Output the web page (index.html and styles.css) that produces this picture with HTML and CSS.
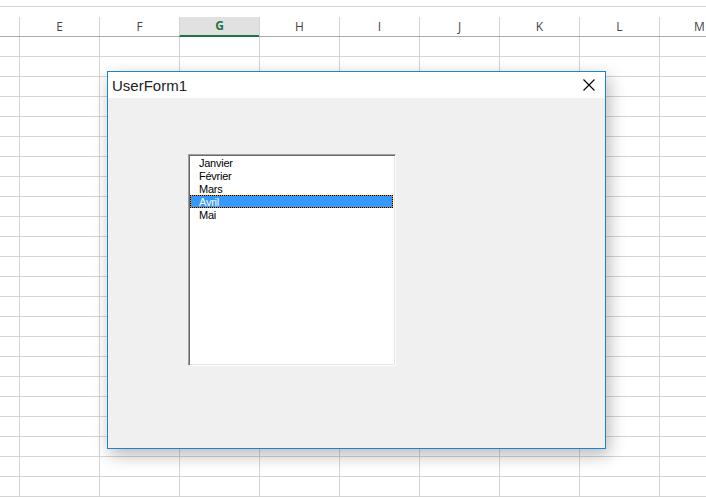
FILE: index.html
```html
<!DOCTYPE html>
<html lang="fr">
<head>
<meta charset="utf-8">
<title>UserForm1</title>
<link rel="stylesheet" href="styles.css">
</head>
<body>
<div class="sheet">
  <div class="topbar"></div>
  <div class="colheads">
    <div class="corner"></div>
    <div class="colhead">E</div>
    <div class="colhead">F</div>
    <div class="colhead active">G</div>
    <div class="colhead">H</div>
    <div class="colhead">I</div>
    <div class="colhead">J</div>
    <div class="colhead">K</div>
    <div class="colhead">L</div>
    <div class="colhead">M</div>
  </div>
  <div class="cells"></div>
</div>

<div class="dialog">
  <div class="titlebar">
    <span class="title">UserForm1</span>
    <svg class="close" width="12" height="12" viewBox="0 0 12 12">
      <path d="M0.5 0.5 L11.5 11.5 M11.5 0.5 L0.5 11.5" stroke="#000" stroke-width="1.1" fill="none"/>
    </svg>
  </div>
  <div class="formbody">
    <div class="listbox">
      <div class="item">Janvier</div>
      <div class="item">Février</div>
      <div class="item">Mars</div>
      <div class="item selected">Avril</div>
      <div class="item">Mai</div>
    </div>
  </div>
</div>
</body>
</html>
```

FILE: styles.css
```css
html, body {
  margin: 0;
  padding: 0;
  background: #fff;
}
body {
  width: 706px;
  height: 497px;
  overflow: hidden;
  position: relative;
  font-family: "Liberation Sans", Arial, sans-serif;
}
.sheet {
  width: 706px;
  height: 497px;
  overflow: hidden;
}
.topbar {
  height: 6px;
  border-bottom: 1px solid #d4d4d4;
}
.colheads {
  display: flex;
  height: 29px;
  border-bottom: 1px solid #ababab;
  width: 760px;
}
.corner {
  flex: 0 0 19px;
}
.colhead {
  flex: 0 0 80px;
  box-sizing: border-box;
  align-self: flex-end;
  height: 19px;
  border-left: 1px solid #d4d4d4;
  text-align: center;
  line-height: 19px;
  font-family: "Open Sans", "Liberation Sans", sans-serif;
  font-size: 12px;
  color: #444;
}
.colhead.active {
  height: 20px;
  margin-bottom: -1px;
  background: #e1e1e1;
  border-bottom: 2px solid #217346;
  line-height: 18px;
  color: #217346;
  font-weight: bold;
  position: relative;
}
.cells {
  height: 470px;
  background-image:
    linear-gradient(to right, #d4d4d4 0 1px, transparent 1px 80px),
    linear-gradient(to bottom, transparent 0 19px, #d4d4d4 19px 20px);
  background-size: 80px 100%, 100% 20px;
  background-position: 19px 0, 0 0;
  background-repeat: repeat-x, repeat-y;
}
.dialog {
  position: absolute;
  left: 107px;
  top: 71px;
  width: 499px;
  height: 378px;
  box-sizing: border-box;
  border: 1px solid #1883d7;
  background: #f0f0f0;
  box-shadow: 3px 6px 16px rgba(0, 0, 0, 0.28);
  display: flex;
  flex-direction: column;
}
.titlebar {
  height: 26px;
  background: #fff;
  display: flex;
  align-items: center;
  justify-content: space-between;
  padding: 0 10px 0 4px;
}
.title {
  font-size: 15px;
  color: #222;
  padding-top: 1px;
}
.close {
  display: block;
}
.formbody {
  flex: 1;
  padding: 56px 0 0 80px;
}
.listbox {
  width: 208px;
  height: 212px;
  box-sizing: border-box;
  background: #fff;
  border: 1px solid;
  border-color: #a0a0a0 #fff #fff #a0a0a0;
  box-shadow: inset 1px 1px 0 #696969, inset -1px -1px 0 #e3e3e3;
  padding: 1px 2px 1px 1px;
}
.item {
  height: 13px;
  line-height: 14px;
  padding-left: 9px;
  font-size: 11px;
  letter-spacing: -0.25px;
  color: #000;
  box-sizing: border-box;
}
.item.selected {
  color: #fff;
  padding-left: 8px;
  line-height: 12px;
  border: 1px dotted #000;
  background: linear-gradient(#3399ff, #3399ff) padding-box, linear-gradient(#d98b2b, #d98b2b) border-box;
}
```
